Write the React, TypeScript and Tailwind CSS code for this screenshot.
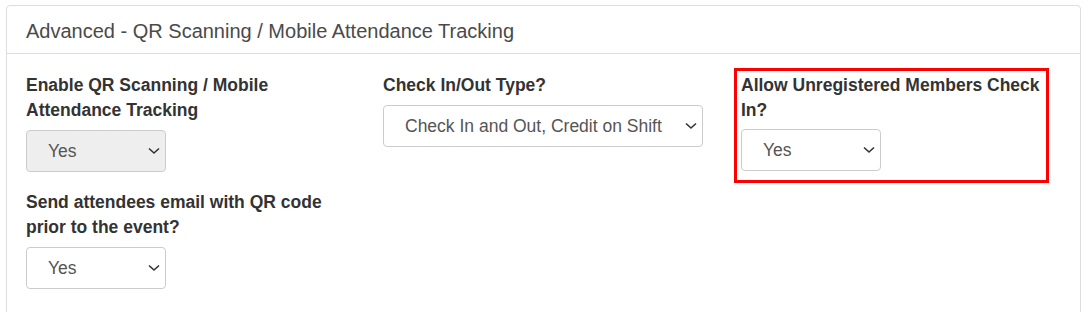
import { useState } from "react"

const Chevron = () => (
  <svg
    className="pointer-events-none absolute right-[6px] top-1/2 -translate-y-1/2"
    width="12"
    height="7"
    viewBox="0 0 12 7"
    fill="none"
  >
    <path d="M1 1l5 4.5L11 1" stroke="#333" strokeWidth="1.6" />
  </svg>
)

type SelectProps = {
  value: string
  options: string[]
  width: string
  disabled?: boolean
}

const Select = ({ value, options, width, disabled }: SelectProps) => {
  const [v, setV] = useState(value)
  return (
    <div className={`relative ${width}`}>
      <select
        value={v}
        disabled={disabled}
        onChange={(e) => setV(e.target.value)}
        className={`h-[42px] w-full appearance-none rounded-[4px] border border-[#ccc] pl-[21px] pr-[24px] text-[17.5px] text-[#555] outline-none ${
          disabled ? "bg-[#eee]" : "bg-white"
        }`}
      >
        {options.map((o) => (
          <option key={o}>{o}</option>
        ))}
      </select>
      <Chevron />
    </div>
  )
}

const Label = ({ children, tight }: { children: React.ReactNode; tight?: boolean }) => (
  <label
    className={`block text-[17.5px] font-bold leading-[25px] text-[#333] ${tight ? "mb-[6px]" : "mb-[7px]"}`}
  >
    {children}
  </label>
)

export default function App() {
  return (
    <div className="h-[312px] w-[1088px] overflow-hidden bg-white pl-[6px] pt-[5px] font-['Liberation_Sans',Arial,sans-serif]">
      <div className="h-[320px] w-[1075px] rounded-t-[4px] border border-[#ddd] bg-white">
        <div className="flex h-[48px] items-center border-b border-[#ddd] pl-[19px] pt-[2px] text-[20px] text-[#4a4a4a]">
          Advanced - QR Scanning / Mobile Attendance Tracking
        </div>
        <div className="flex items-start pl-[19px] pt-[14px]">
          <div className="w-[357px] pt-[5px]">
            <div className="w-[327px]">
              <Label>Enable QR Scanning / Mobile Attendance Tracking</Label>
              <Select value="Yes" options={["Yes", "No"]} width="w-[140px]" disabled />
            </div>
            <div className="mt-[18px] w-[327px]">
              <Label>Send attendees email with QR code prior to the event?</Label>
              <Select value="Yes" options={["Yes", "No"]} width="w-[140px]" />
            </div>
          </div>
          <div className="w-[351px] pt-[5px]">
            <div className="w-[327px]">
              <Label>Check In/Out Type?</Label>
              <Select
                value="Check In and Out, Credit on Shift"
                options={["Check In and Out, Credit on Shift", "Check In Only"]}
                width="w-[320px]"
              />
            </div>
          </div>
          <div className="w-[315px] border-[3px] border-[#f00] px-[4px] pb-[9px] pt-[2px]">
            <Label tight>Allow Unregistered Members Check In?</Label>
            <Select value="Yes" options={["Yes", "No"]} width="w-[140px]" />
          </div>
        </div>
      </div>
    </div>
  )
}
